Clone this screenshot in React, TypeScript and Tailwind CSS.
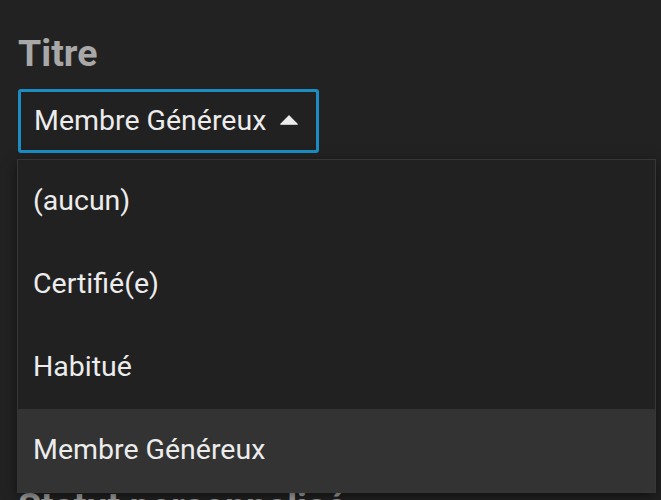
const options = ["(aucun)", "Certifié(e)", "Habitué", "Membre Généreux"]

export default function App() {
  const selected = "Membre Généreux"

  return (
    <div className="relative h-[500px] w-[661px] overflow-hidden bg-[#222222] font-['Roboto','Liberation_Sans',sans-serif]">
      <div className="px-[18px] pt-[31px]">
        <h2 className="text-[37.5px] font-bold leading-[44px] text-[#a8a8a8]">Titre</h2>

        {/* select field, open */}
        <button className="mt-[14px] flex h-[64px] w-[301px] items-center justify-between rounded-[3px] border-[3px] border-[#1b8dc2] bg-[#212121] pl-[13px] pr-[18px] text-left">
          <span className="text-[28.5px] leading-none text-[#ececec]">{selected}</span>
          <svg width="18" height="10" viewBox="0 0 18 10" className="mb-[2px]">
            <path d="M9 0.8 L17.2 9.2 L0.8 9.2 Z" fill="#ececec" stroke="#ececec" strokeWidth="1.2" strokeLinejoin="round" />
          </svg>
        </button>

        <h2 className="mt-[331px] text-[37.5px] font-bold leading-[44px] text-[#a8a8a8]">Statut personnalisé</h2>
      </div>

      {/* dropdown menu */}
      <ul className="absolute left-[17px] top-[159px] w-[639px] border border-[#363636] bg-[#212121] shadow-[0_4px_12px_rgba(0,0,0,0.5)]">
        {options.map((o) => (
          <li
            key={o}
            className={
              o === selected
                ? "flex h-[83px] items-center bg-[#333333] pl-[15px] text-[28.5px] text-[#ececec]"
                : "flex h-[83px] items-center pl-[15px] text-[28.5px] text-[#ececec]"
            }
          >
            {o}
          </li>
        ))}
      </ul>
    </div>
  )
}
